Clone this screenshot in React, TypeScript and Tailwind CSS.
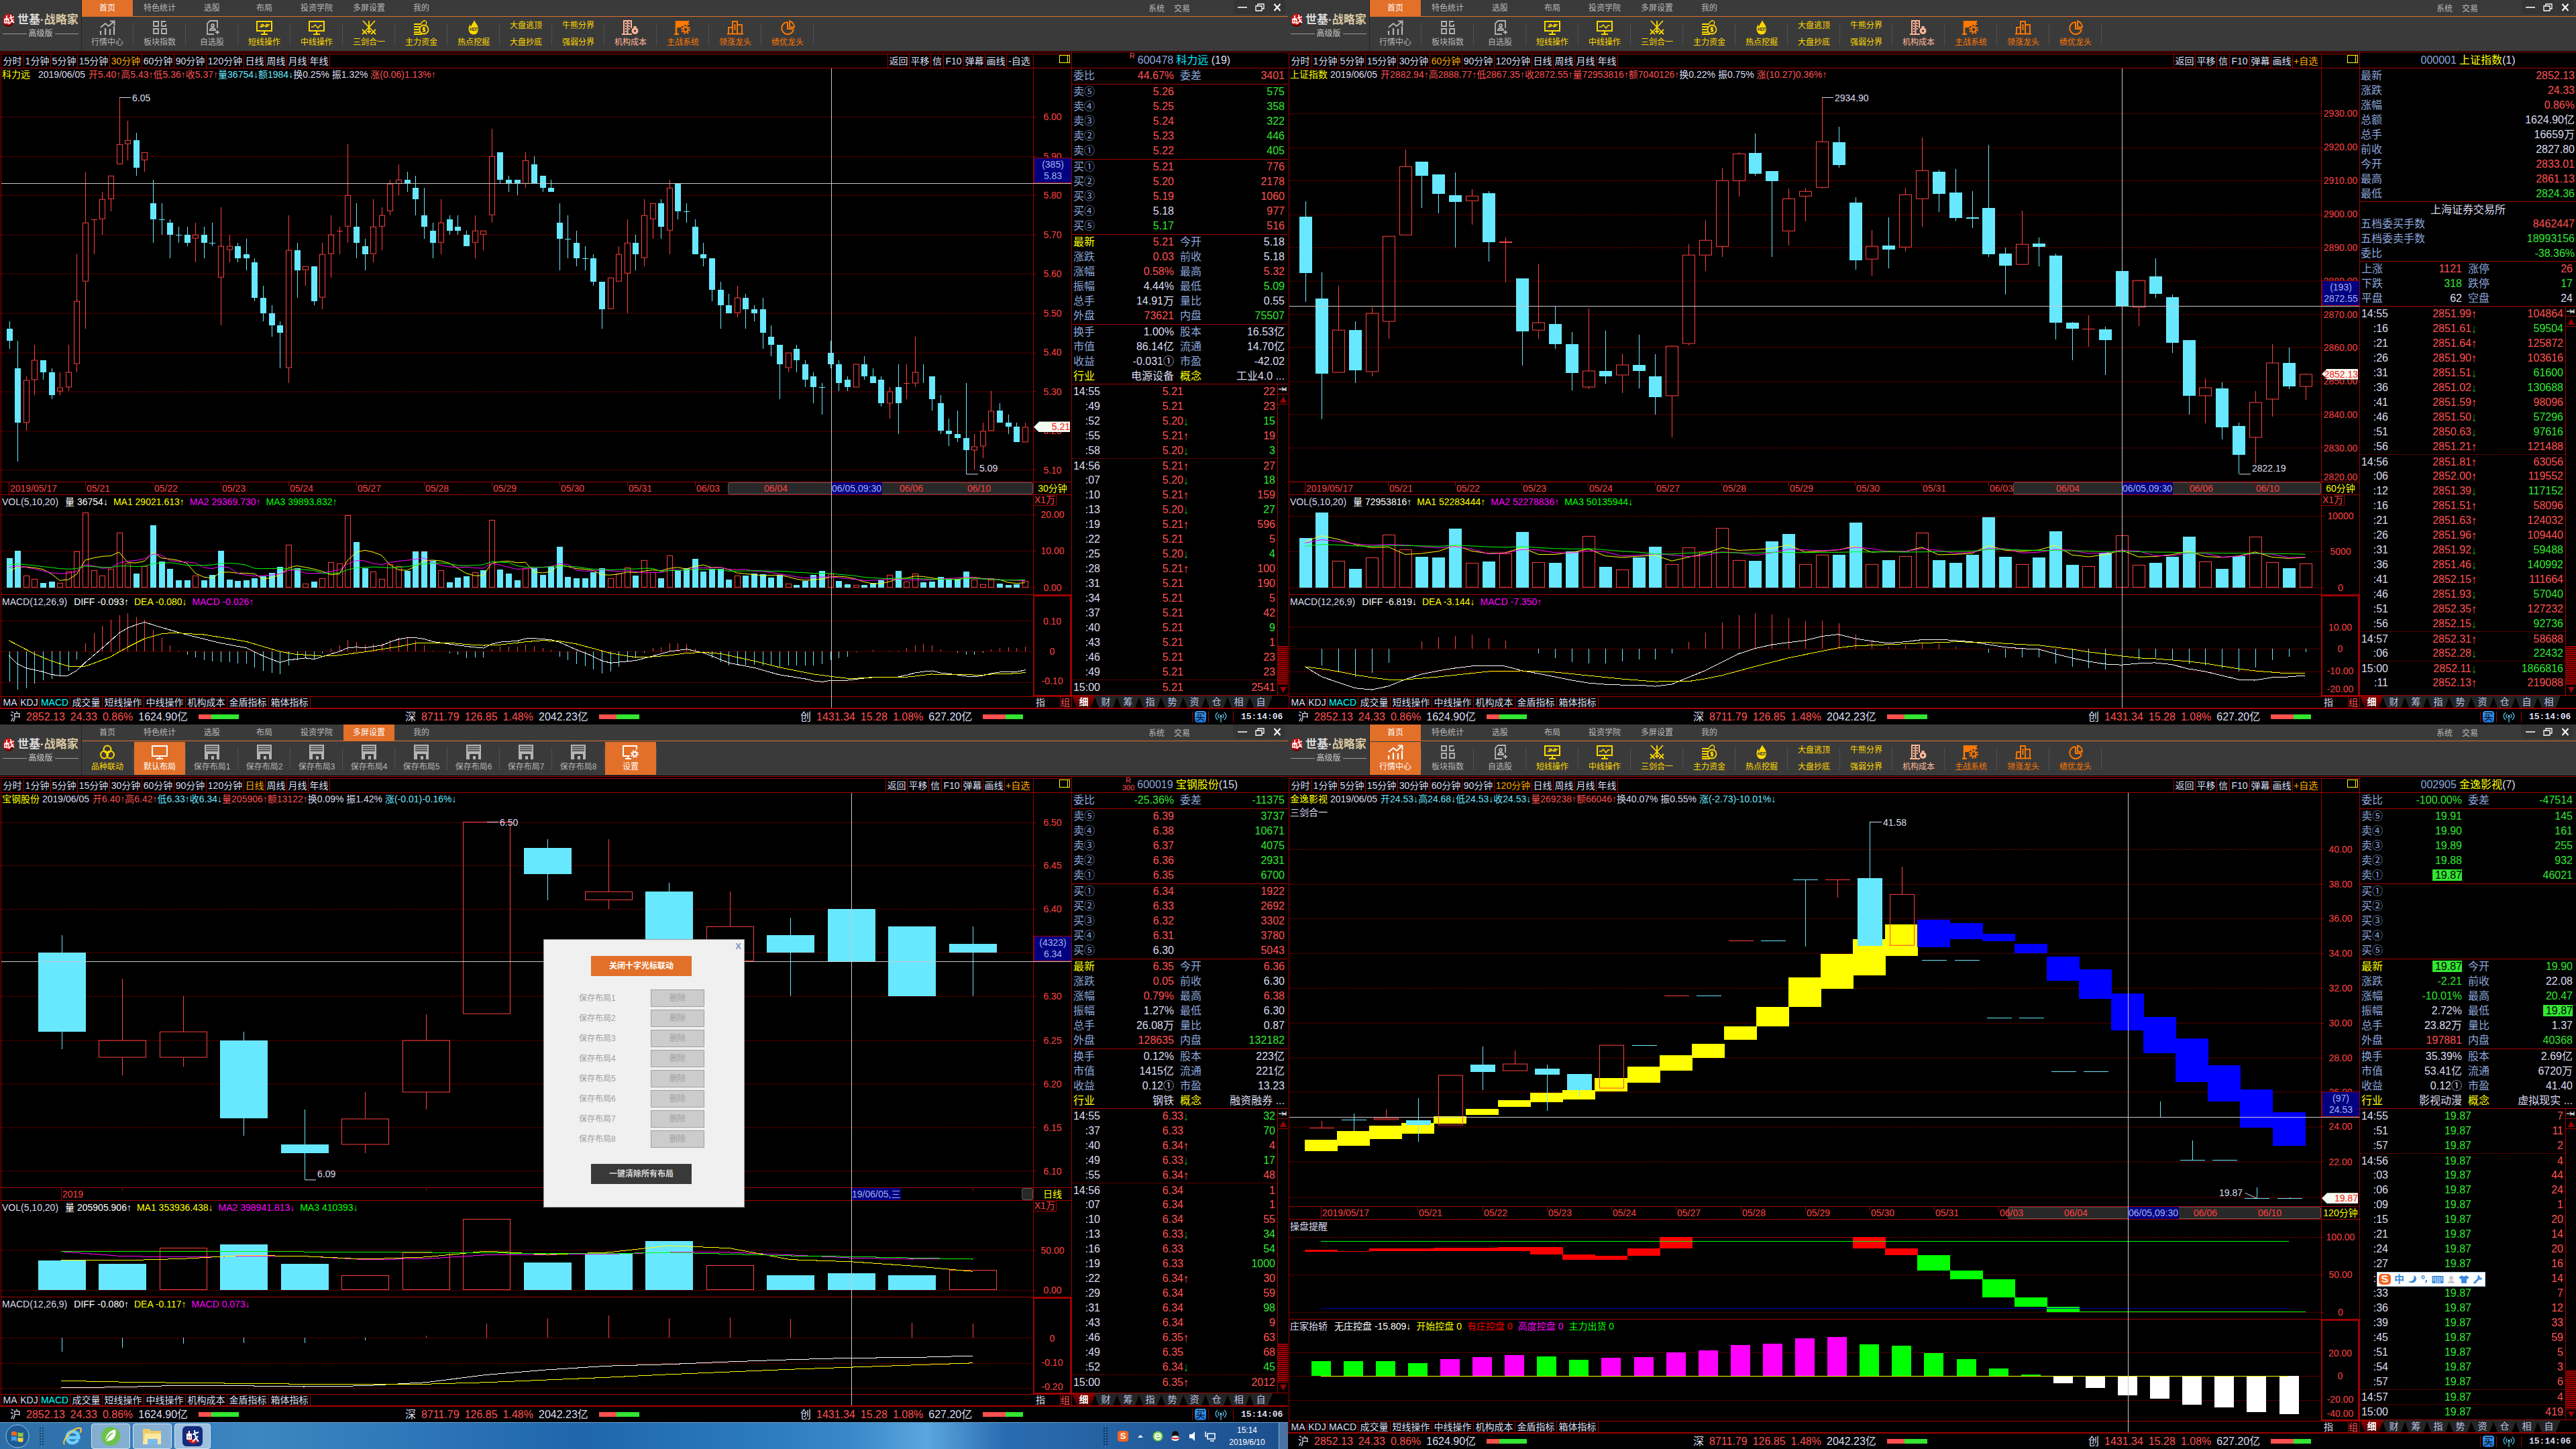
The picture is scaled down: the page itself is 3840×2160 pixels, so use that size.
import React from "react";

/* ---------- shared colours ---------- */
const R = "text-[#ff5050]";
const G = "text-[#32e632]";
const W = "text-[#dcdcf0]";
const Y = "text-[#ffff00]";
const C = "text-[#68e8ff]";
const M = "text-[#ff00ff]";
const B = "text-[#8ca6dc]";
const H = "bg-[#32e632] text-black pl-1";
const RED = "#ff4040";
const CYAN = "#68e8ff";
const LINE = "#a00000";

type Pt = [number, number];
type Map1 = (v: number) => number;
type Seg = [string, string];

/* ---------- toolbar icons ---------- */
const ic = "h-[22px] w-[26px]";
const Svg = ({ children }: { children: React.ReactNode }) => (
  <svg className={ic} viewBox="0 0 26 22" fill="none" stroke="currentColor" strokeWidth={2}>
    {children}
  </svg>
);
const icons: Record<string, React.ReactNode> = {
  trend: (
    <Svg>
      <path d="M3 22v-6M10 22V12M17 22v-9M23 22V9" strokeWidth={2.2} />
      <path d="M3 11l7-6 5 4 8-7M17 1.5h6.500V8" />
    </Svg>
  ),
  grid: (
    <Svg>
      <path d="M4 2h7v7H4zM22 2h-6v7h6V6M4 13h7v7H4zM16 13h7v7h-7z" strokeWidth={1.8} />
    </Svg>
  ),
  doc: (
    <Svg>
      <path d="M21 12V1H10L6 5v16h10" strokeWidth={1.8} />
      <circle cx="14" cy="8" r="2" strokeWidth={1.8} />
      <path d="M10 15c0-4 8-4 8 0zM21 15v6M18 18h6" strokeWidth={1.8} />
    </Svg>
  ),
  screenA: (
    <Svg>
      <path d="M2 2h22v14H2zM13 16v4M8 21h10" />
      <path d="M6 10h3l2-3 4 3 3-3h3" strokeWidth={1.3} />
      <circle cx="10" cy="8" r="1.8" strokeWidth={1.2} />
      <circle cx="17" cy="8" r="1.8" strokeWidth={1.2} />
    </Svg>
  ),
  screenB: (
    <Svg>
      <path d="M2 2h22v14H2zM13 16v4M8 21h10" />
      <path d="M5 10h3l3-3 4 5 3-4h3" strokeWidth={1.4} />
    </Svg>
  ),
  swords: (
    <Svg>
      <path d="M4 1l16 17M22 1L6 18M13 1v19M3 14l7 7M23 14l-7 7M3 21l4-4M23 21l-4-4M10 17h6" strokeWidth={1.8} />
    </Svg>
  ),
  coins: (
    <Svg>
      <path d="M2 6h11M2 10h9M2 14h8M2 18h9M2 21h12" strokeWidth={2} />
      <circle cx="17" cy="14" r="6.5" strokeWidth={1.8} />
      <path d="M19 11.5h-3.5V14h3v2.500H15M17 10v8M12 6c2-4 5-6 7-5s2 3 1 6" strokeWidth={1.3} />
    </Svg>
  ),
  flame: (
    <svg className={ic} viewBox="0 0 26 22">
      <path d="M14 0c1 4 6 7 6 13 0 5-3 8.500-7 8.500S5.500 18 5.500 13C5.500 10 7 8 8 6c0 2 .5 3 1.500 4C9.500 6 13 4 14 0z" fill="currentColor" />
      <path d="M8 11v5M11 11v5M8 13.500h3M12.500 11.500h3v4h-3zM16.500 11.500h3M18 11.500V16" stroke="#3a3a3a" strokeWidth={1} fill="none" />
    </svg>
  ),
  building: (
    <svg className={ic} viewBox="0 0 26 22" fill="none" stroke="currentColor">
      <path d="M3 21V1h11v11M0 21h15M5 5h2M10 5h2M5 9h2M10 9h2M5 13h2M10 13h2M5 17h2M8.500 2v19" strokeWidth={2} />
      <circle cx="19.500" cy="16" r="5" fill="currentColor" stroke="none" />
      <path d="M17 9h5l-1.500 3h-2z" fill="currentColor" stroke="none" />
      <circle cx="19.500" cy="16" r="1.700" fill="#3a3a3a" stroke="none" />
    </svg>
  ),
  strategy: (
    <svg className={ic} viewBox="0 0 26 22" fill="none" stroke="currentColor">
      <path d="M3 1v20M0 21h7" strokeWidth={2.6} />
      <path d="M3 1h20l-2 3 2 3h-6l-8 4H3z" fill="currentColor" stroke="none" />
      <circle cx="17" cy="14" r="7" fill="#3a3a3a" stroke="none" />
      <circle cx="17" cy="14" r="3.600" strokeWidth={2.4} />
      <circle cx="17" cy="14" r="6" strokeWidth={2} strokeDasharray="2.4 2.3" />
    </svg>
  ),
  podium: (
    <Svg>
      <path d="M3 20v-9h6v9M9 20V2h7v18M16 20V7h7v13M1 20.500h24M12.500 6v9" strokeWidth={1.9} />
    </Svg>
  ),
  pie: (
    <Svg>
      <path d="M13 3a9 9 0 109 11" strokeWidth={2} />
      <path d="M16 1.500a9 9 0 017 9h-7zM13 3v10h9" strokeWidth={2} />
    </Svg>
  ),
  link: (
    <Svg>
      <circle cx="13" cy="7" r="5.500" />
      <circle cx="8.500" cy="15" r="5.500" />
      <circle cx="17.500" cy="15" r="5.500" />
    </Svg>
  ),
  monitor: (
    <Svg>
      <path d="M2 2h22v15H2zM13 17v4M8 21h10" />
    </Svg>
  ),
  disk: (
    <svg className={ic} viewBox="0 0 26 22">
      <path d="M2 0h22v22H2z" fill="currentColor" />
      <path d="M4 3h18M4 6h18M4 9h18" stroke="#3a3a3a" strokeWidth={1.4} />
      <path d="M7 14h13v8h-4v-5h-4v5H7z" fill="#3a3a3a" />
    </svg>
  ),
  setup: (
    <Svg>
      <path d="M12 17H2V2h20v5M9 17v4M5 21h9" />
      <circle cx="19" cy="14" r="3" />
      <circle cx="19" cy="14" r="5" strokeWidth={1.8} strokeDasharray="2 1.930" />
    </Svg>
  ),
};

type Tool = { icon?: string; text: string; text2?: string; tone: string; on?: boolean };
const gray = "text-[#b4b4b4]";
const gold = "text-[#ffd800]";
const pink = "text-[#ffb699]";
const orange = "text-[#ff7800]";

const homeTools: Tool[] = [
  { icon: "trend", text: "行情中心", tone: gray },
  { icon: "grid", text: "板块指数", tone: gray },
  { icon: "doc", text: "自选股", tone: gray },
  { icon: "screenA", text: "短线操作", tone: gold },
  { icon: "screenB", text: "中线操作", tone: gold },
  { icon: "swords", text: "三剑合一", tone: gold },
  { icon: "coins", text: "主力资金", tone: gold },
  { icon: "flame", text: "热点挖掘", tone: gold },
  { text: "大盘逃顶", text2: "大盘抄底", tone: gold },
  { text: "牛熊分界", text2: "强弱分界", tone: gold },
  { icon: "building", text: "机构成本", tone: pink },
  { icon: "strategy", text: "主战系统", tone: orange },
  { icon: "podium", text: "领涨龙头", tone: orange },
  { icon: "pie", text: "绩优龙头", tone: orange },
];
const layoutTools: Tool[] = [
  { icon: "link", text: "品种联动", tone: gold },
  { icon: "monitor", text: "默认布局", tone: "text-white", on: true },
  ...[1, 2, 3, 4, 5, 6, 7, 8].map((n) => ({ icon: "disk", text: "保存布局" + n, tone: gray })),
  { icon: "setup", text: "设置", tone: "text-white", on: true },
];
const menu = ["首页", "特色统计", "选股", "布局", "投资学院", "多屏设置", "我的"];

function Header({ active, tools }: { active: string; tools: Tool[] }) {
  return (
    <header className="flex h-[76px] shrink-0 bg-[#3a3a3a] text-[12px]">
      <div className="flex w-[122px] shrink-0 flex-col border-r border-[#252525] pt-5">
        <div className="flex items-center gap-1 pl-1">
          <svg className="h-5 w-[18px]" viewBox="0 0 18 20">
            <ellipse cx="9" cy="10" rx="8.500" ry="9.500" fill="#d01414" />
            <path d="M2 15c4 4 10 4 14-3 0 5-3 7.500-7 7.500S3 18 2 15z" fill="#500000" />
            <path d="M6 3v11M3 8h6M3 9h6v5H3zM10 7l7-2M12 2c0 6 2 10 5 12M16 9l-7 7" stroke="#fff" strokeWidth={1.6} fill="none" />
          </svg>
          <span className="text-[17px] leading-5 font-bold whitespace-nowrap">
            <span className="text-[#dadada]">世基·</span>
            <span className="text-[#d9c8a2]">战略家</span>
          </span>
        </div>
        <div className="mt-0.5 flex items-center gap-[3px] px-1 leading-4 text-[#c8c8c8]">
          <span className="h-px flex-1 bg-[#9a9a9a]" />
          高级版
          <span className="h-px flex-1 bg-[#9a9a9a]" />
        </div>
      </div>
      <div className="flex min-w-0 flex-1 flex-col">
        <div className="flex h-[25px] border-b border-[#e27029]">
          <nav className="flex gap-0.5">
            {menu.map((m) => (
              <button key={m} className={m === active ? "h-6 w-[76px] bg-[#e27029] text-white" : "h-6 w-[76px] text-[#b8b8b8]"}>
                {m}
              </button>
            ))}
          </nav>
          <div className="ml-auto flex items-start">
            <button className="mr-[14px] h-[26px] text-[#b8b8b8]">系统</button>
            <button className="mr-[65px] h-[26px] text-[#b8b8b8]">交易</button>
            <button aria-label="最小化" className="mr-px flex h-[21px] w-[25px] items-center justify-center bg-[#343434]">
              <span className="h-0.5 w-[14px] bg-[#d0d0d0]" />
            </button>
            <button aria-label="还原" className="mr-px flex h-[21px] w-[25px] items-center justify-center bg-[#343434]">
              <svg className="h-3 w-3.5" viewBox="0 0 14 12" fill="none" stroke="#fff" strokeWidth={1.3}>
                <path d="M1 4h9v7H1zM4 4V1h9v7h-3" />
              </svg>
            </button>
            <button aria-label="关闭" className="mr-1 flex h-[21px] w-[25px] items-center justify-center bg-[#343434]">
              <svg className="h-3 w-3" viewBox="0 0 12 12" stroke="#fff" strokeWidth={2}>
                <path d="M1.500 1l9 10M10.500 1l-9 10" />
              </svg>
            </button>
          </div>
        </div>
        <div className="flex items-center pt-px">
          {tools.map((t) => (
            <React.Fragment key={t.text}>
              {t.text2 ? (
                <div className={"flex h-[49px] w-[76px] flex-col items-center justify-between py-1 " + t.tone}>
                  <button className="leading-4">{t.text}</button>
                  <button className="leading-4">{t.text2}</button>
                </div>
              ) : (
                <button className={(t.on ? "bg-[#e27029] " : "") + "flex h-[49px] w-[76px] flex-col items-center justify-between py-1 leading-4 " + t.tone}>
                  {icons[t.icon!]}
                  <span>{t.text}</span>
                </button>
              )}
              <span className="mr-px h-[34px] w-px bg-[#505050]" />
            </React.Fragment>
          ))}
        </div>
      </div>
    </header>
  );
}

/* ---------- period strip ---------- */
const periods: [string, string][] = [
  ["分时", "w-[34px]"],
  ["1分钟", "w-[40px]"],
  ["5分钟", "w-[40px]"],
  ["15分钟", "w-[48px]"],
  ["30分钟", "w-[48px]"],
  ["60分钟", "w-[48px]"],
  ["90分钟", "w-[48px]"],
  ["120分钟", "w-[56px]"],
  ["日线", "w-[32px]"],
  ["周线", "w-[32px]"],
  ["月线", "w-[32px]"],
  ["年线", "w-[32px]"],
];
const actions: [string, string][] = [
  ["返回", "w-[32px]"],
  ["平移", "w-[32px]"],
  ["信", "w-[19px]"],
  ["F10", "w-[30px]"],
  ["弹幕", "w-[32px]"],
  ["画线", "w-[32px]"],
];

function PeriodBar({ active, added }: { active: string; added: boolean }) {
  return (
    <div className="mt-0.5 flex h-[22px] shrink-0 border-y border-[#a00000] text-[14px] leading-5 text-[#dcdcf0]">
      <div className="flex flex-1 whitespace-nowrap">
        {periods.map(([p, w]) => (
          <button key={p} className={w + " flex shrink-0 justify-center border-r border-[#a00000] " + (p === active ? "text-[#ffa500]" : "")}>
            {p}
          </button>
        ))}
        <div className="ml-auto flex">
          {actions.map(([a, w]) => (
            <button key={a} className={w + " flex shrink-0 justify-center border-l border-[#a00000]"}>
              {a}
            </button>
          ))}
          {added ? (
            <button className="w-[40px] shrink-0 border-l border-[#a00000] pl-0.5 text-left">-自选</button>
          ) : (
            <button className="w-[43px] shrink-0 border-l border-[#a00000] pl-px text-left text-[#ffa500]">+自选</button>
          )}
        </div>
      </div>
      <div className="flex w-[57px] shrink-0 justify-end border-l border-[#a00000] pt-px pr-0.5">
        <button aria-label="侧栏" className="flex h-3 w-4 justify-end border border-[#ffff00]">
          <span className="mr-0.5 h-full w-px bg-[#ffff00]" />
        </button>
      </div>
    </div>
  );
}

/* ---------- chart primitives ---------- */
type Bar = { up: boolean; a: number; b: number; h: number; l: number };
const parseBars = (s: string): Bar[] =>
  s
    .trim()
    .split(/\s+/)
    .map((t) => {
      const [a, b, h, l] = t.slice(1).split(",").map(Number);
      return { up: t[0] === "r", a, b: b ?? a, h: h ?? a, l: l ?? b ?? a };
    });
const parseVols = (s: string): { k: string; v: number }[] =>
  s
    .trim()
    .split(/\s+/)
    .map((t) => ({ k: t[0], v: Number(t.slice(1)) }));

function Candles({ bars, x0, step, w, fy }: { bars: Bar[]; x0: number; step: number; w: number; fy: Map1 }) {
  return (
    <g>
      {bars.map((b, i) => {
        const cx = Math.round(x0 + step * i);
        const t = Math.round(fy(b.a));
        const m = Math.round(fy(b.b));
        const hi = Math.round(fy(b.h));
        const lo = Math.round(fy(b.l));
        const col = b.up ? RED : CYAN;
        const left = cx - (w - 1) / 2;
        return (
          <g key={i} fill={col}>
            {hi < t && <rect x={cx} y={hi} width={1} height={t - hi} />}
            {lo > m && <rect x={cx} y={m} width={1} height={lo - m} />}
            {b.up && m - t > 2 ? (
              <rect x={left + 0.5} y={t + 0.5} width={w - 1} height={m - t - 1} fill="none" stroke={col} />
            ) : (
              <rect x={left} y={t} width={w} height={Math.max(m - t, 1)} />
            )}
          </g>
        );
      })}
    </g>
  );
}
function Volumes({ vols, x0, step, w, base, fy }: { vols: { k: string; v: number }[]; x0: number; step: number; w: number; base: number; fy: Map1 }) {
  return (
    <g>
      {vols.map((b, i) => {
        const left = Math.round(x0 + step * i) - (w - 1) / 2;
        const t = Math.round(fy(b.v));
        return b.k === "r" ? (
          <rect key={i} x={left + 0.5} y={t + 0.5} width={w - 1} height={base - t - 1} fill="none" stroke={RED} />
        ) : (
          <rect key={i} x={left} y={t} width={w} height={base - t} fill={CYAN} />
        );
      })}
    </g>
  );
}
function Hist({ vals, x0, step, zero, fy }: { vals: number[]; x0: number; step: number; zero: number; fy: Map1 }) {
  return (
    <g>
      {vals.map((v, i) => {
        const y = Math.round(fy(v));
        return <rect key={i} x={Math.round(x0 + step * i)} y={Math.min(y, zero)} width={1} height={Math.abs(y - zero)} fill={y < zero ? RED : CYAN} />;
      })}
    </g>
  );
}
const Poly = ({ pts, color }: { pts: Pt[]; color: string }) => (
  <polyline points={pts.map((p) => p.join(",")).join(" ")} fill="none" stroke={color} strokeWidth={1} />
);
const conv = (s: string, fx: Map1, fy: Map1): Pt[] =>
  s
    .trim()
    .split(/\s+/)
    .map((p) => {
      const [x, y] = p.split(",").map(Number);
      return [fx(x), fy(y)];
    });
const average = (vols: { v: number }[], before: number[], n: number, x0: number, step: number, fy: Map1): Pt[] => {
  const all = [...before, ...vols.map((d) => d.v)];
  return vols.map((_, i) => {
    const e = i + before.length + 1;
    const s = all.slice(e - n, e).reduce((p, q) => p + q, 0) / n;
    return [x0 + step * i, fy(s)];
  });
};
const fill = (n: number, v: number): number[] => Array.from({ length: n }, () => v);

type PaneProps = {
  grow: string;
  y: number;
  h: number;
  grid: number[];
  labels: [number, string][];
  boxed?: boolean;
  unit?: boolean;
  cross?: number;
  tip?: [string, string];
  last?: [number, string];
  marks?: [number, number, string][];
  title: React.ReactNode;
  children: React.ReactNode;
};
function Pane({ grow, y, h, grid, labels, boxed, unit, cross, tip, last, marks = [], title, children }: PaneProps) {
  const pc = (v: number) => ((v - y) / h) * 100 + "%";
  return (
    <div className={grow + " relative flex min-h-0 border-b border-[#a00000]"}>
      <div className="relative min-w-0 flex-1 overflow-hidden">
        <svg className="absolute inset-0 h-full w-full" viewBox={`2 ${y} 1538 ${h}`} preserveAspectRatio="none" shapeRendering="crispEdges">
          {grid.map((g) => (
            <line key={g} x1={2} x2={1540} y1={Math.round(g) + 0.5} y2={Math.round(g) + 0.5} stroke={LINE} strokeDasharray="1 1" />
          ))}
          {children}
        </svg>
        <div className="relative px-px text-[14px] leading-4 whitespace-nowrap">{title}</div>
        {marks.map(([mx, my, t]) => (
          <span key={t} className={"absolute -translate-y-1/2 text-[14px] leading-4 " + W} style={{ left: ((mx - 2) / 1538) * 100 + "%", top: pc(my) }}>
            {t}
          </span>
        ))}
      </div>
      <div className={(boxed ? "border-2 " : "border-l ") + "relative w-[57px] shrink-0 overflow-hidden border-[#a00000] text-[14px] leading-4 text-[#ff4040]"}>
        {unit && <div className="w-[34px] border-r border-b border-[#a00000] text-center leading-[15px]">X1万</div>}
        {labels.map(([ly, t]) => (
          <span key={t} className="absolute inset-x-0 -translate-y-1/2 text-center" style={{ top: pc(ly) }}>
            {t}
          </span>
        ))}
        {!boxed && grid.map((g) => <span key={g} className="absolute left-0 h-px w-[3px] bg-[#a00000]" style={{ top: pc(Math.round(g)) }} />)}
        {tip && cross && (
          <div className="absolute inset-x-0 -translate-y-full border border-r-0 border-[#a00000] bg-[#000080] py-px text-center leading-[17px] text-[#a0b4f0]" style={{ top: pc(cross) }}>
            {tip[0]}
            <br />
            {tip[1]}
          </div>
        )}
        {last && (
          <div className="absolute right-0.5 left-0 h-4 -translate-y-1/2 bg-[#f4fbf0] text-right leading-4 text-[#ff1414] [clip-path:polygon(0_50%,8px_0,100%_0,100%_100%,8px_100%)]" style={{ top: pc(last[0]) }}>
            {last[1]}
          </div>
        )}
      </div>
      {cross && <div className="absolute inset-x-0 h-px bg-[#c8c8c8]" style={{ top: pc(cross) }} />}
    </div>
  );
}

type AxisProps = { dates: [number, string][]; thumb: number; cursor: [number, string]; period: string; ticks?: number[] };
function TimeAxis({ dates, thumb, cursor, period, ticks = [] }: AxisProps) {
  const pc = (x: number) => ((x - 2) / 1538) * 100 + "%";
  return (
    <div className="flex h-[19px] shrink-0 border-b border-[#a00000] text-[14px] leading-[18px]">
      <div className="relative flex-1 overflow-hidden text-[#ff4040]">
        <div className="absolute inset-y-0 right-0 rounded-[3px] border border-[#5a5a5a] bg-[#282828]" style={{ left: pc(thumb) }} />
        {ticks.map((x) => (
          <span key={x} className="absolute top-0 h-1 w-px bg-[#a00000]" style={{ left: pc(x) }} />
        ))}
        {dates.map(([x, t], i) => (
          <span key={t} className="absolute top-0 flex" style={{ left: pc(x) }}>
            <span className={(i ? "h-1.5" : "h-[18px]") + " w-px bg-[#a00000]"} />
            <span className="pl-px">{t}</span>
          </span>
        ))}
        <span className="absolute inset-y-0 bg-[#000080] px-px text-[#a0b4f0]" style={{ left: pc(cursor[0]) }}>
          {cursor[1]}
        </span>
      </div>
      <div className={"w-[57px] shrink-0 border-l border-[#a00000] text-center " + Y}>{period}</div>
    </div>
  );
}

const Legend = ({ name, items }: { name: string; items: Seg[] }) => (
  <div className="flex gap-2 pt-0.5">
    <span className={W + " mr-0.5"}>{name}</span>
    {items.map(([t, c]) => (
      <span key={t} className={c}>
        {t}
      </span>
    ))}
  </div>
);
const Info = ({ name, date, segs, sub }: { name: string; date: string; segs: Seg[]; sub?: string }) => (
  <div className="pt-px">
    <div className="flex">
      <span className={"mr-1 min-w-[50px] " + Y}>{name}</span>
      <span className={"mr-[5px] " + W}>{date}</span>
      {segs.map(([t, c]) => (
        <span key={t} className={c + " whitespace-pre"}>
          {t}
        </span>
      ))}
    </div>
    {sub && <div className={"pt-1 " + W}>{sub}</div>}
  </div>
);

const indicatorTabs: [string, string][] = [
  ["MA", "w-[27px]"],
  ["KDJ", "w-[30px]"],
  ["MACD", "w-[46px]"],
  ["成交量", "w-[48px]"],
  ["短线操作", "w-[62px]"],
  ["中线操作", "w-[62px]"],
  ["机构成本", "w-[62px]"],
  ["金盾指标", "w-[62px]"],
  ["箱体指标", "w-[62px]"],
];
function IndicatorBar({ macd }: { macd: boolean }) {
  return (
    <div className={"flex h-4 shrink-0 text-[14px] leading-4 " + W}>
      {indicatorTabs.map(([t, w]) => (
        <button key={t} className={w + " flex shrink-0 justify-center overflow-hidden border-r border-[#a00000] whitespace-nowrap " + (macd && t === "MACD" ? "text-[#00ffff]" : "")}>
          {t}
        </button>
      ))}
      <button className="ml-auto pr-[22px]">指</button>
      <button className="mr-0.5 border-l border-[#a00000] text-[#ff5050]">组</button>
    </div>
  );
}

/* ---------- status bar ---------- */
const market: [string, string, string, string, string, string, string][] = [
  ["沪", "2852.13", "24.33", "0.86%", "1624.90亿", "w-[19px]", "w-[41px]"],
  ["深", "8711.79", "126.85", "1.48%", "2042.23亿", "w-[26px]", "w-[34px]"],
  ["创", "1431.34", "15.28", "1.08%", "627.20亿", "w-[34px]", "w-[26px]"],
];
function StatusBar() {
  return (
    <footer className={"flex h-[25px] shrink-0 items-center border-t-2 border-[#a00000] text-[16px] leading-[22px] whitespace-nowrap " + W}>
      {market.map(([n, p, d, r, amt, rw, gw]) => (
        <div key={n} className="flex flex-1 items-center gap-2 pl-[15px]">
          <span>{n}</span>
          <span className={R}>{p}</span>
          <span className={R}>{d}</span>
          <span className={R}>{r}</span>
          <span>{amt}</span>
          <span className="ml-2 flex h-[7px]">
            <span className={rw + " bg-[#ff5050]"} />
            <span className={gw + " bg-[#32e632]"} />
          </span>
        </div>
      ))}
      <div className="flex w-[153px] items-center pl-[10px]">
        <span className="mr-[3px] h-4 w-px bg-[#a00000]" />
        <button className="h-[17px] w-[17px] rounded-sm bg-linear-to-b from-[#3c9cf4] to-[#1c6cd0] text-[14px] leading-[17px] text-black">买</button>
        <span className="mx-[3px] h-4 w-px bg-[#a00000]" />
        <svg className="mx-1.5 h-4 w-[18px]" viewBox="0 0 18 16" fill="none" stroke="#4cb0d4" strokeWidth={1.5}>
          <path d="M4 1c-4 4-4 7 0 11M14 1c4 4 4 7 0 11M6.500 3.500c-2 2-2 4 0 6M11.500 3.500c2 2 2 4 0 6M9 7v9" />
          <circle cx="9" cy="6.500" r="1.500" fill="#9ad4ea" stroke="none" />
        </svg>
        <span className="mx-[3px] h-4 w-px bg-[#a00000]" />
        <span className="ml-2 font-['Liberation_Mono',monospace] text-[13px] font-bold">15:14:06</span>
      </div>
    </footer>
  );
}

/* ---------- quote panel ---------- */
const circled = /([①②③④⑤])/;
const Mixed = ({ text }: { text: string }) => (
  <>
    {text.split(circled).map((s, i) =>
      circled.test(s) ? (
        <span key={i} className="font-['Noto_Sans_CJK_SC'] leading-none">
          {s}
        </span>
      ) : (
        s
      ),
    )}
  </>
);

type QRow = [string, string, string, string?, string?, string?, boolean?];
function Quote({ rows, last }: { rows: QRow[]; last?: boolean }) {
  return (
    <div className={(last ? "" : "pb-px ") + "border-b border-[#a00000]"}>
      <table className="w-full table-fixed border-separate border-spacing-0 text-[16px] leading-[22px] whitespace-nowrap">
        <colgroup>
          <col className="w-[42px]" />
          <col className="w-[110px]" />
          <col className="w-[41px]" />
          <col />
        </colgroup>
        <tbody>
          {rows.map(([a, v, vc, b, v2, c2, hot]) => (
            <tr key={a}>
              <th className={"h-[22px] p-0 pl-0.5 text-left font-normal " + (hot ? Y : B)}>
                <Mixed text={a} />
              </th>
              <td className="p-0 text-right">
                <span className={vc}>
                  <Mixed text={v} />
                </span>
              </td>
              <th className={"p-0 pl-[9px] text-left font-normal " + (hot && b === "概念" ? Y : B)}>{b}</th>
              <td className="p-0 pr-[5px] text-right">
                <span className={c2}>{v2}</span>
              </td>
            </tr>
          ))}
        </tbody>
      </table>
    </div>
  );
}

type Tick = [string, string, string, string];
const parseTicks = (s: string): Tick[] => s.trim().split(/\s+/).map((t) => t.split("|") as Tick);

function Ticks({ rows, tone }: { rows: Tick[]; tone: string }) {
  return (
    <div className="flex min-h-0 flex-1 border-b border-[#a00000]">
      <div className="min-w-0 flex-1 overflow-hidden">
        <table className="w-full table-fixed border-separate border-spacing-0 text-[16px] leading-5">
          <colgroup>
            <col className="w-[42px]" />
            <col className="w-[132px]" />
            <col />
          </colgroup>
          <tbody>
            {rows.map(([t, p, d, q], i) => {
              const sep = t.length > 3 && i > 0 ? " border-t border-dotted border-[#a00000]" : "";
              return (
                <tr key={i}>
                  <td className={"h-[22px] p-0 text-right " + W + sep}>{t}</td>
                  <td className={"p-0 " + tone + sep}>
                    <span className="flex justify-end">
                      {p}
                      <span className={"flex w-2 justify-center text-[18px] leading-5 " + (d === "d" ? "text-[#1e961e]" : R)}>{d === "u" ? "↑" : d === "d" ? "↓" : ""}</span>
                    </span>
                  </td>
                  <td className={"p-0 pr-[3px] text-right " + (q[0] === "g" ? G : R) + sep}>{q.slice(1)}</td>
                </tr>
              );
            })}
          </tbody>
        </table>
      </div>
      <div className="flex w-4 shrink-0 flex-col items-center border-l border-[#a00000]">
        <button aria-label="固定" className="flex h-[15px] w-full items-center justify-center border-b border-[#a00000]">
          <svg className="h-2 w-[14px]" viewBox="0 0 14 8" stroke="#c8c8c8" fill="#c8c8c8">
            <path d="M0 4h6M6 1v6M6 4h5M11 1v6" strokeWidth={1.4} />
            <path d="M7 3h4v3H7z" stroke="none" />
          </svg>
        </button>
        <button aria-label="向上" className="flex h-[15px] w-full items-center justify-center border-b border-[#a00000]">
          <span className="border-x-[5px] border-b-[9px] border-x-transparent border-b-[#a00000]" />
        </button>
        <span className="flex-1" />
        <span className="h-[58px] w-full bg-[repeating-linear-gradient(#a00000_0_2px,#200000_2px_3px)]" />
        <button aria-label="向下" className="flex h-[15px] w-full items-center justify-center">
          <span className="border-x-[5px] border-t-[9px] border-x-transparent border-t-[#a00000]" />
        </button>
      </div>
    </div>
  );
}

function PanelTabs({ swap }: { swap?: boolean }) {
  const tabs = ["细", "财", "筹", "指", "势", "资", "仓", ...(swap ? ["自", "相"] : ["相", "自"])];
  return (
    <div className="flex h-[18px] shrink-0">
      {tabs.map((t, i) => (
        <button
          key={t}
          className={
            "-mr-0.5 w-[35px] text-[14px] leading-[18px] [clip-path:polygon(0_0,100%_0,80%_100%,20%_100%)] " +
            (i === 0 ? "bg-linear-to-b from-[#900000] to-[#400000] font-bold text-white" : "bg-[#242424] text-[#b8c4e8]")
          }
        >
          {t}
        </button>
      ))}
    </div>
  );
}

const PanelTitle = ({ tag, tag2, code, name, tone, n }: { tag?: string; tag2?: string; code: string; name: string; tone: string; n: string }) => (
  <div className="flex h-6 shrink-0 items-center justify-center border-b border-[#a00000] text-[16px] leading-[22px] whitespace-nowrap">
    {tag && (
      <span className="mr-1 flex h-full flex-col text-center text-[11px] leading-[11px] text-[#ff5050]">
        <span>{tag}</span>
        {tag2 && <span>{tag2}</span>}
      </span>
    )}
    <span className={B}>{code}</span>
    <span className={"ml-1 " + tone}>{name}</span>
    <span className={W}>{n}</span>
  </div>
);

/* ---------- one terminal window ---------- */
type WinProps = {
  menuOn: string;
  tools: Tool[];
  period: string;
  added?: boolean;
  macd?: boolean;
  crossX: number;
  charts: React.ReactNode;
  panel: React.ReactNode;
  children?: React.ReactNode;
};
function Terminal({ menuOn, tools, period, added = false, macd = true, crossX, charts, panel, children }: WinProps) {
  return (
    <section className="relative flex min-h-0 flex-1 flex-col overflow-hidden bg-black">
      <Header active={menuOn} tools={tools} />
      <div className="mt-px ml-px flex min-h-0 flex-1 border-t border-l border-[#a00000]">
        <div className="flex min-w-0 flex-1 flex-col">
          <PeriodBar active={period} added={added} />
          <div className="relative flex min-h-0 flex-1 flex-col">
            {charts}
            <IndicatorBar macd={macd} />
            <div className="absolute inset-y-0 w-px bg-[#c8c8c8]" style={{ left: ((crossX - 2) / 1595) * 100 + "%" }} />
          </div>
        </div>
        <aside className="flex w-[323px] shrink-0 flex-col border-l border-[#a00000]">{panel}</aside>
      </div>
      <StatusBar />
      {children}
    </section>
  );
}

/* ---------- window 1: 科力远 ---------- */
const k1 = parseBars(`c546,543,548,541 c536,522,543,512 r533,522,534,520 r538,533,542,529 c538,535,538,533 c535,529,536,528 r531,530,535,529 r535,531,542,530 r553,537,565,535 r573,558,586,546
r574,574,574,565 r579,574,581,570 r585,579,585,576 r593,588,605,588 r594,593,599,589 c594,587,596,585 r591,589,591,586 c578,574,584,568 c574,574,578,570 c573,570,574,564
c570,570,572,568 c570,568,572,567 r570,569,573,563 c570,568,572,564 c568,568,573,567 r567,559,577,547 r567,566,570,563 c567,564,568,563 c565,564,569,561 c563,554,564,553
c554,550,557,548 c550,547,552,544 c547,545,548,536 r566,536,575,532 c566,561,568,554 r562,561,562,557 c562,553,562,552 r565,554,568,551 r570,565,575,559 r571,571,572,565
r580,572,593,568 c572,568,578,564 c567,565,569,561 r572,565,579,563 r575,572,577,566 r583,576,584,575 r584,583,588,580 c584,583,586,581 c582,579,585,575 c575,572,582,569
c571,568,573,564 r573,568,579,565 c574,571,575,570 c572,571,575,570 c570,567,571,567 r571,568,575,564 r571,570,571,566 r590,575,597,573 c591,584,591,583 c584,583,585,581
c584,583,584,580 r589,583,591,582 c588,583,590,583 c585,582,585,581 c582,581,584,581 c573,569,578,561 c569,569,575,564 c568,564,571,562 c564,564,567,561 c564,558,565,557
c558,551,558,546 r559,551 r565,558,567,558 r568,560,574,550 c568,565,570,561 r575,564,579,562 r578,574,578,569 c578,572,579,569 r582,571,584,565 c583,576,583,574
c576,576,578,573 c572,565,574,565 c565,564,568,562 c564,556,564,553 c556,552,558,546 c552,550,555,550 r554,550,557,549 c554,551,555,546 c551,550,552,548 c551,545,554,541
c544,542,547,539 c542,537,542,528 r540,536,540,535 c541,538,542,535 c537,533,538,531 c534,531,535,527 c531,531,532,524 c540,537,543,536 c537,532,538,530 c533,531,534,530
r537,531 c537,534,539,533 c534,532,536,532 c533,527,534,526 r530,527,531,523 c531,527,537,519 r532,532,537,528 r535,532,544,531 c534,534,537,532 c534,528,534,525
c527,520,529,519 c520,519,523,516 c519,518,525,517 c518,515,532,509 r516,515,519,510 r520,516,522,513 r525,520,530,520 c525,522,527,522 c522,521,524,519 c521,517,522,517 r521,517,522,517`);
const v1 = parseVols(`c459 c426 r538 r553 c570 c564 r571 r519 r430 r256 r514 r538 r508 r346 r484 c528 r496 c312 c474 c507 c558 c558 r538 c558 c533 c426 c555 c561 c558 c549 c541 c525 c498 r400 c504 r574 c564 r550 r478 r484
r268 c387 c503 r520 r553 r486 r496 c516 c429 c429 c470 r514 c567 c546 c540 r523 c513 r289 c510 c528 c558 r504 c504 c534 c496 c408 c543 c549 c549 c522 c504 r550 r529 r502 c537 r469 r523 c549 r448 c516
c504 c462 c519 c508 c508 c555 r538 c537 c528 c531 c546 c534 r574 c579 c560 c534 c516 r532 c561 c576 r580 c579 c571 c559 r533 c517 r563 r527 c568 c565 c544 c556 c551 c520 r554 r575 r556 c574 c580 c577 r560`);
const m1 = `1007 1044 1038 1018 1001 996 983 960 909 840 795 762 735 714 705 723 735 780 815 849 873 890 900 912 918 920 921 927 927 945 960 969 975 936 912 901 906 885 864 849 825 834 846 843 840 825 816 816 828 849
873 877 884 890 903 900 900 867 855 855 855 846 852 861 870 896 912 930 939 954 972 963 942 921 903 881 861 858 839 840 843 864 878 903 921 935 935 934 933 936 936 943 936 936 936 936 930 912 903 896
880 877 870 876 873 873 861 849 843 849 867 876 882 890 891 882 867 861 858 861 855`.split(/\s+/).map(Number);
const fx1: Map1 = (x) => x / 1.206;
const fy1: Map1 = (y) => 680 + y / 3;
const fxr: Map1 = (x) => 1300 + x / 2.45;
const fyr: Map1 = (y) => 560 + y / 3;
const diff1 = [
  ...conv("16,893 31,930 46,948 62,957 77,965 92,977 107,983 122,982 138,960 155,920 180,868 200,825 214,793 230,770 245,756 260,745 290,768 335,800 381,828 397,838 443,859 473,895 503,924 518,913 533,909 549,904 565,909 580,898 610,875 625,859 641,856 656,859 671,853 686,848 702,832 717,820 732,814 747,814 762,819 778,831 808,842 838,852 869,860 884,842 900,833 930,828 945,818 960,817 991,823 1006,834 1037,868 1060,890 1083,917 1098,926 1143,915 1174,895 1205,874 1235,865 1251,874 1266,882 1311,926 1357,948 1400,978 1448,997 1463,1006 1479,1010 1494,1003 1524,1003 1560,992", fx1, fy1),
  ...conv("0,1348 50,1348 95,1348 126,1340 158,1330 185,1325 219,1321 250,1330 312,1339 344,1345 374,1348 400,1343 437,1332 467,1327 535,1324 560,1317", fxr, fyr),
];
const dea1 = [
  ...conv("16,826 62,886 92,917 122,940 138,943 155,940 198,900 230,855 260,818 290,797 305,793 320,793 366,800 412,818 443,831 473,853 503,875 530,887 565,893 580,896 605,893 656,877 717,853 747,839 762,836 808,836 840,844 869,848 900,845 945,832 976,826 1006,829 1037,842 1067,862 1098,883 1143,901 1160,901 1205,892 1235,882 1266,879 1296,885 1357,918 1400,945 1463,976 1494,986 1524,995 1560,993", fx1, fy1),
  ...conv("0,1351 110,1350 158,1345 215,1336 330,1338 400,1340 437,1336 467,1336 500,1334 560,1329", fxr, fyr),
];
const before1 = [...fill(10, 476), ...fill(5, 480), ...fill(4, 535)];
const X1 = 13.5;
const S1 = 12.62;
const price1: Map1 = (c) => 174.3 + (600 - c) * 5.854;

const Charts1 = () => (
  <>
    <Pane
      grow="flex-[617]"
      y={102}
      h={617}
      grid={[600, 590, 580, 570, 560, 550, 540, 530, 520, 510].map(price1)}
      labels={[600, 590, 580, 570, 560, 550, 540, 530, 520, 510].map((c) => [price1(c), (c / 100).toFixed(2)])}
      cross={273}
      tip={["(385)", "5.83"]}
      last={[637, "5.21"]}
      marks={[
        [197, 146, "6.05"],
        [1460, 699, "5.09"],
      ]}
      title={
        <Info
          name="科力远"
          date="2019/06/05"
          segs={[
            ["开5.40↑", R],
            ["高5.43↑", R],
            ["低5.36↑", R],
            ["收5.37↑", R],
            ["量36754↓", C],
            ["额1984↓", C],
            ["换0.25% ", W],
            ["振1.32% ", W],
            ["涨(0.06)1.13%↑", R],
          ]}
        />
      }
    >
      <Candles bars={k1} x0={X1} step={S1} w={9} fy={price1} />
      <path d="M178 145.500h17M1440 707.500h18" stroke="#dcdcf0" />
    </Pane>
    <TimeAxis
      dates={[[13, "2019/05/17"], [127, "05/21"], [228, "05/22"], [329, "05/23"], [430, "05/24"], [531, "05/27"], [632, "05/28"], [733, "05/29"], [834, "05/30"], [935, "05/31"], [1036, "06/03"], [1137, "06/04"], [1339, "06/06"], [1440, "06/10"]]}
      thumb={1085}
      cursor={[1239, "06/05,09:30"]}
      period="30分钟"
    />
    <Pane
      grow="flex-[148]"
      y={739}
      h={148}
      grid={[768, 822, 877]}
      labels={[[768, "20.00"], [822, "10.00"], [877, "0.00"]]}
      unit
      title={<Legend name="VOL(5,10,20)" items={[["量 36754↓", "text-white"], ["MA1 29021.613↑", Y], ["MA2 29369.730↑", M], ["MA3 39893.832↑", "text-[#00ff00]"]]} />}
    >
      <Volumes vols={v1} x0={X1} step={S1} w={9} base={877} fy={fy1} />
      <Poly pts={average(v1, before1, 5, X1, S1, fy1)} color="#ffff00" />
      <Poly pts={average(v1, before1, 10, X1, S1, fy1)} color="#ff00ff" />
      <Poly pts={average(v1, before1, 20, X1, S1, fy1)} color="#00ff00" />
    </Pane>
    <Pane
      grow="flex-[151]"
      y={888}
      h={150}
      grid={[926, 972, 1017]}
      labels={[[926, "0.10"], [972, "0"], [1017, "-0.10"]]}
      boxed
      title={<Legend name="MACD(12,26,9)" items={[["DIFF -0.093↑", "text-white"], ["DEA -0.080↓", Y], ["MACD -0.026↑", M]]} />}
    >
      <Hist vals={m1} x0={X1} step={S1} zero={972} fy={fy1} />
      <Poly pts={diff1} color="#ffffff" />
      <Poly pts={dea1} color="#ffff00" />
    </Pane>
  </>
);
const Panel1 = () => (
  <>
    <PanelTitle tag="R" code="600478" name="科力远" tone="text-[#00e8ff]" n="&nbsp;(19)" />
    <Quote rows={[["委比", "44.67%", R, "委差", "3401", R]]} />
    <Quote rows={[["卖⑤", "5.26", R, "", "575", G], ["卖④", "5.25", R, "", "358", G], ["卖③", "5.24", R, "", "322", G], ["卖②", "5.23", R, "", "446", G], ["卖①", "5.22", R, "", "405", G]]} />
    <Quote rows={[["买①", "5.21", R, "", "776", R], ["买②", "5.20", R, "", "2178", R], ["买③", "5.19", R, "", "1060", R], ["买④", "5.18", W, "", "977", R], ["买⑤", "5.17", G, "", "516", R]]} />
    <Quote
      rows={[
        ["最新", "5.21", R, "今开", "5.18", W, true],
        ["涨跌", "0.03", R, "前收", "5.18", W],
        ["涨幅", "0.58%", R, "最高", "5.32", R],
        ["振幅", "4.44%", W, "最低", "5.09", G],
        ["总手", "14.91万", W, "量比", "0.55", W],
        ["外盘", "73621", R, "内盘", "75507", G],
      ]}
    />
    <Quote
      last
      rows={[
        ["换手", "1.00%", W, "股本", "16.53亿", W],
        ["市值", "86.14亿", W, "流通", "14.70亿", W],
        ["收益", "-0.031①", W, "市盈", "-42.02", W],
        ["行业", "电源设备", W, "概念", "工业4.0 ...", W, true],
      ]}
    />
    <Ticks
      tone={R}
      rows={parseTicks(
        "14:55|5.21||r22 :49|5.21||r23 :52|5.20|d|g15 :55|5.21|u|r19 :58|5.20|d|g3 14:56|5.21|u|r27 :07|5.20|d|g18 :10|5.21|u|r159 :13|5.20|d|g27 :19|5.21|u|r596 :22|5.21||r5 :25|5.20|d|g4 :28|5.21|u|r100 :31|5.21||r190 :34|5.21||r5 :37|5.21||r42 :40|5.21||g9 :43|5.21||r1 :46|5.21||r23 :49|5.21||r23 15:00|5.21||r2541",
      )}
    />
    <PanelTabs />
  </>
);

/* ---------- window 2: 上证指数 ---------- */
const k2 = parseBars(`c595,801,539,906 c894,1169,799,1338 r1010,1165,848,1165 c1009,1156,978,1205 r947,1163,926,1181 r667,979,667,1041 r412,665,350,665 c394,446,394,563 c441,512,441,583 c517,541,434,708
r520,538,495,625 c510,688,502,759 r686,690,671,835 c821,1014,821,1139 r983,1011,767,1041 c987,1061,923,1078 c1061,1166,1017,1232 r1160,1221,930,1227 c1159,1178,1012,1208 r1137,1177,1095,1242
c1137,1159,1027,1225 c1181,1257,1098,1321 r1069,1253,1065,1404 r734,1062,696,1066 r680,737,608,794 r464,705,419,742 r365,466,360,522 c363,439,292,446 c429,465,429,742 r528,649,492,701
r503,523,489,612 r321,489,159,492 c323,407,267,416 c544,755,524,789 r702,751,644,811 c701,715,598,784 r515,708,489,723 r427,531,306,632 c431,512,424,578 c507,600,421,610
c598,603,502,637 c563,733,333,742 c730,774,708,880 r696,771,573,771 c693,706,671,777 c737,982,729,1044 c982,1004,980,1120 r1004,1007,955,1071 c1007,1046,997,1174 c794,922,722,985
r829,928,826,995 c813,877,747,892 c889,1056,880,1093 c1046,1252,1046,1321 r1219,1253,1188,1352 c1225,1367,1203,1411 c1362,1468,1350,1536 r1273,1403,1235,1500 r1130,1263,1061,1328 c1129,1218,1073,1227 r1172,1217,1169,1267`);
const v2 = parseVols(`c309 c195 r412 c447 r397 r295 r361 c393 c396 c267 r421 c414 r379 c282 r418 c420 c369 r301 c438 r451 c396 c348 r427 r352 r370 r265 r409 c411 c324 c291 r427 r385 c384 c240 r427 c408 r391 r286 c408 c420
c384 c216 c393 r427 c396 c279 c429 r436 c376 r298 r430 c420 c393 c303 r415 c447 c390 r304 r418 c444 r424`);
const m2 = `805 876 904 927 909 864 805 771 753 746 741 756 768 805 825 843 861 867 867 858 849 849 825 774 732 687 654 645 651 666 681 678 690 741 768 795 789 777 780 795 804 822 840 840 840 867 882 888 894 874 852 840 849 870 876 888 903 885 852 837 819`.split(" ").map(Number);
const id: Map1 = (x) => x;
const fy2: Map1 = (y) => 80 + y / 2.45;
const fy2b: Map1 = (y) => 700 + y / 3;
const X2 = 25.5;
const S2 = 24.85;
const before2 = [...fill(10, 361), ...fill(5, 336), ...fill(4, 330)];
const grid2 = [219, 342, 464, 587, 709, 831, 954, 1074, 1197, 1319, 1441, 1564].map(fy2);

const Charts2 = () => (
  <>
    <Pane
      grow="flex-[617]"
      y={102}
      h={617}
      grid={grid2}
      labels={grid2.map((g, i) => [Math.min(g, 712), (2930 - i * 10).toFixed(2)])}
      cross={456}
      tip={["(193)", "2872.55"]}
      last={[558, "2852.13"]}
      marks={[
        [815, 146, "2934.90"],
        [1437, 699, "2822.19"],
      ]}
      title={
        <Info
          name="上证指数"
          date="2019/06/05"
          segs={[
            ["开2882.94↑", R],
            ["高2888.77↑", R],
            ["低2867.35↑", R],
            ["收2872.55↑", R],
            ["量72953816↑", R],
            ["额7040126↑", R],
            ["换0.22% ", W],
            ["振0.75% ", W],
            ["涨(10.27)0.36%↑", R],
          ]}
        />
      }
    >
      <Candles bars={k2} x0={X2} step={S2} w={19} fy={fy2} />
      <path d="M796 145.500h17M1418 707.500h17" stroke="#dcdcf0" />
    </Pane>
    <TimeAxis
      dates={[[25, "2019/05/17"], [149, "05/21"], [249, "05/22"], [348, "05/23"], [447, "05/24"], [547, "05/27"], [646, "05/28"], [746, "05/29"], [845, "05/30"], [944, "05/31"], [1044, "06/03"], [1143, "06/04"], [1342, "06/06"], [1441, "06/10"]]}
      thumb={1081}
      cursor={[1243, "06/05,09:30"]}
      period="60分钟"
    />
    <Pane
      grow="flex-[148]"
      y={739}
      h={148}
      grid={[770, 823, 877]}
      labels={[[770, "10000"], [823, "5000"], [877, "0"]]}
      unit
      title={<Legend name="VOL(5,10,20)" items={[["量 72953816↑", "text-white"], ["MA1 52283444↑", Y], ["MA2 52278836↑", M], ["MA3 50135944↓", "text-[#00ff00]"]]} />}
    >
      <Volumes vols={v2} x0={X2} step={S2} w={19} base={877} fy={fy2b} />
      <Poly pts={average(v2, before2, 5, X2, S2, fy2b)} color="#ffff00" />
      <Poly pts={average(v2, before2, 10, X2, S2, fy2b)} color="#ff00ff" />
      <Poly pts={average(v2, before2, 20, X2, S2, fy2b)} color="#00ff00" />
    </Pane>
    <Pane
      grow="flex-[151]"
      y={888}
      h={150}
      grid={[935, 968, 1001, 1034]}
      labels={[[935, "10.00"], [968, "0"], [1001, "-10.00"], [1029, "-20.00"]]}
      boxed
      title={<Legend name="MACD(12,26,9)" items={[["DIFF -6.819↓", "text-white"], ["DEA -3.144↓", Y], ["MACD -7.350↑", M]]} />}
    >
      <Hist vals={m2} x0={X2} step={S2} zero={968} fy={fy2b} />
      <Poly
        color="#ffffff"
        pts={conv("25,882 50,927 75,953 100,978 125,985 149,970 175,939 199,916 224,901 249,889 274,880 323,880 350,901 373,913 398,928 423,943 447,955 472,961 497,964 522,964 547,970 572,961 597,930 621,901 646,864 671,826 696,802 721,785 746,775 771,766 795,748 820,739 845,757 870,769 895,778 920,772 944,763 980,763 1019,772 1044,784 1069,796 1094,802 1119,805 1143,825 1168,844 1193,859 1218,871 1243,875 1268,868 1292,865 1317,873 1342,892 1367,904 1392,922 1417,940 1441,943 1466,931 1491,928 1516,922", id, fy2b)}
      />
      <Poly
        color="#ffff00"
        pts={conv("25,883 50,892 75,904 100,919 125,931 149,940 175,940 224,928 274,912 299,904 348,901 398,907 447,922 497,937 547,949 597,948 621,937 646,922 696,882 746,844 795,814 820,799 845,790 895,784 944,778 994,772 1044,775 1094,784 1119,787 1143,796 1168,805 1193,817 1243,835 1268,844 1292,847 1342,859 1367,868 1417,892 1441,901 1491,913 1516,913", id, fy2b)}
      />
    </Pane>
  </>
);

function Wide({ rows }: { rows: [string, string, string][] }) {
  return (
    <table className="w-full border-separate border-spacing-0 text-[16px] leading-[22px]">
      <tbody>
        {rows.map(([a, v, c]) => (
          <tr key={a}>
            <th className={"h-[22px] p-0 pl-px text-left font-normal " + B}>{a}</th>
            <td className={"p-0 pr-0.5 text-right " + c}>{v}</td>
          </tr>
        ))}
      </tbody>
    </table>
  );
}
const Panel2 = () => (
  <>
    <PanelTitle code="000001" name="上证指数" tone={Y} n="(1)" />
    <div className="border-b border-[#a00000]">
      <Wide
        rows={[
          ["最新", "2852.13", R],
          ["涨跌", "24.33", R],
          ["涨幅", "0.86%", R],
          ["总额", "1624.90亿", W],
          ["总手", "16659万", W],
          ["前收", "2827.80", W],
          ["今开", "2833.01", R],
          ["最高", "2861.13", R],
          ["最低", "2824.36", G],
        ]}
      />
    </div>
    <div className="border-b border-[#a00000]">
      <div className={"pt-0.5 text-center text-[16px] leading-5 " + W}>上海证券交易所</div>
      <Wide rows={[["五档委买手数", "8462447", R], ["五档委卖手数", "18993156", G], ["委比", "-38.36%", G]]} />
    </div>
    <Quote last rows={[["上涨", "1121", R, "涨停", "26", R], ["下跌", "318", G, "跌停", "17", G], ["平盘", "62", W, "空盘", "24", W]]} />
    <Ticks
      tone={R}
      rows={parseTicks(
        "14:55|2851.99|u|r104864 :16|2851.61|d|g59504 :21|2851.64|u|r125872 :26|2851.90|u|r103616 :31|2851.51|d|g61600 :36|2851.02|d|g130688 :41|2851.59|u|r98096 :46|2851.50|d|g57296 :51|2850.63|d|g97616 :56|2851.21|u|r121488 14:56|2851.81|u|r63056 :06|2852.00|u|r119552 :12|2851.39|d|g117152 :16|2851.51|u|r58096 :21|2851.63|u|r124032 :26|2851.96|u|r109440 :31|2851.92|d|g59488 :36|2851.46|d|g140992 :41|2852.15|u|r111664 :46|2851.93|d|g57040 :51|2852.35|u|r127232 :56|2852.15|d|g92736 14:57|2852.31|u|r58688 :06|2852.28|d|g22432 15:00|2852.11|d|g1866816 :11|2852.13|u|r219088",
      )}
    />
    <PanelTabs swap />
  </>
);

/* ---------- window 3: 宝钢股份 ---------- */
const k3 = parseBars(`c416,605,374,646 r626,667,478,709 r605,667,520,688 c626,813,605,854 c875,896,792,958 r813,875,750,896 r626,750,563,792 r104,563 c166,229,146,291 r270,291,146,312 c270,480,250,500 r354,436,270,436 c374,416,333,520 c312,437,270,458 c354,520 c395,416,354,520`);
const v3 = parseVols("c1150 c1158 r1122 c1114 c1158 r1185 r1132 r1052 c1155 c1136 c1106 r1161 c1186 c1181 c1186 r1172");
const m3 = "1368 1358 1349 1347 1347 1341 1330 1301 1288 1282 1288 1286 1290 1293 1299 1301".split(" ").map(Number);
const fy3: Map1 = (y) => 80 + y / 1.6;
const X3 = 91.5;
const S3 = 90.57;
const grid3 = [105, 208, 312, 416, 520, 626, 730, 834, 938].map(fy3);

const Charts3 = () => (
  <>
    <Pane
      grow="flex-[589]"
      y={102}
      h={589}
      grid={grid3}
      labels={grid3.map((g, i) => [g, (6.5 - i * 0.05).toFixed(2)])}
      cross={353}
      tip={["(4323)", "6.34"]}
      marks={[
        [745, 146, "6.50"],
        [473, 671, "6.09"],
      ]}
      title={
        <Info
          name="宝钢股份"
          date="2019/06/05"
          segs={[
            ["开6.40↑", R],
            ["高6.42↑", R],
            ["低6.33↑", C],
            ["收6.34↓", C],
            ["量205906↑", R],
            ["额13122↑", R],
            ["换0.09% ", W],
            ["振1.42% ", W],
            ["涨(-0.01)-0.16%↓", C],
          ]}
        />
      }
    >
      <Candles bars={k3} x0={X3} step={S3} w={71} fy={fy3} />
      <path d="M726 145.500h17M454 679.500h17" stroke="#dcdcf0" />
    </Pane>
    <TimeAxis dates={[[91, "2019"]]} thumb={1523} cursor={[1269, "19/06/05,三"]} period="日线" ticks={[182, 635, 1450]} />
    <Pane
      grow="flex-[143]"
      y={711}
      h={142}
      grid={[784, 843]}
      labels={[[784, "50.00"], [843, "0.00"]]}
      unit
      title={<Legend name="VOL(5,10,20)" items={[["量 205905.906↑", "text-white"], ["MA1 353936.438↓", Y], ["MA2 398941.813↓", M], ["MA3 410393↓", "text-[#00ff00]"]]} />}
    >
      <Volumes vols={v3} x0={X3} step={S3} w={71} base={843} fy={fy3} />
      <Poly color="#ff00ff" pts={conv("91,1130 182,1141 272,1143 363,1141 453,1141 544,1149 635,1147 725,1138 816,1137 906,1136 997,1132 1088,1132 1178,1138 1269,1145 1359,1148 1450,1147", id, fy3)} />
      <Poly color="#ffff00" pts={conv("91,1151 182,1151 272,1147 363,1139 453,1141 544,1148 635,1143 725,1129 816,1137 906,1132 997,1116 1088,1122 1178,1149 1269,1154 1359,1164 1450,1177", id, fy3)} />
      <Poly color="#00ff00" pts={conv("91,1130 272,1130 363,1129 544,1132 635,1132 725,1133 816,1135 906,1135 997,1132 1088,1136 1178,1140 1269,1142 1359,1145 1450,1148", id, fy3)} />
    </Pane>
    <Pane
      grow="flex-[144]"
      y={854}
      h={143}
      grid={[914, 951, 988]}
      labels={[[914, "0"], [951, "-0.10"], [988, "-0.20"]]}
      boxed
      title={<Legend name="MACD(12,26,9)" items={[["DIFF -0.080↑", "text-white"], ["DEA -0.117↑", Y], ["MACD 0.073↓", M]]} />}
    >
      <Hist vals={m3} x0={X3} step={S3} zero={914} fy={fy3} />
      <Poly color="#ffffff" pts={conv("91,1453 182,1451 250,1448 360,1448 453,1450 544,1448 600,1443 635,1440 680,1431 725,1422 816,1410 906,1401 997,1397 1088,1391 1178,1386 1269,1382 1359,1381 1450,1377", id, fy3)} />
      <Poly color="#ffff00" pts={conv("91,1436 182,1439 272,1441 453,1444 544,1445 635,1444 725,1440 816,1434 906,1428 997,1421 1088,1415 1178,1409 1269,1404 1359,1399 1450,1394", id, fy3)} />
    </Pane>
  </>
);
const Panel3 = () => (
  <>
    <PanelTitle tag="R" tag2="300" code="600019" name="宝钢股份" tone={Y} n="(15)" />
    <Quote rows={[["委比", "-25.36%", G, "委差", "-11375", G]]} />
    <Quote rows={[["卖⑤", "6.39", R, "", "3737", G], ["卖④", "6.38", R, "", "10671", G], ["卖③", "6.37", R, "", "4075", G], ["卖②", "6.36", R, "", "2931", G], ["卖①", "6.35", R, "", "6700", G]]} />
    <Quote rows={[["买①", "6.34", R, "", "1922", R], ["买②", "6.33", R, "", "2692", R], ["买③", "6.32", R, "", "3302", R], ["买④", "6.31", R, "", "3780", R], ["买⑤", "6.30", W, "", "5043", R]]} />
    <Quote
      rows={[
        ["最新", "6.35", R, "今开", "6.36", R, true],
        ["涨跌", "0.05", R, "前收", "6.30", W],
        ["涨幅", "0.79%", R, "最高", "6.38", R],
        ["振幅", "1.27%", W, "最低", "6.30", W],
        ["总手", "26.08万", W, "量比", "0.87", W],
        ["外盘", "128635", R, "内盘", "132182", G],
      ]}
    />
    <Quote
      last
      rows={[
        ["换手", "0.12%", W, "股本", "223亿", W],
        ["市值", "1415亿", W, "流通", "221亿", W],
        ["收益", "0.12①", W, "市盈", "13.23", W],
        ["行业", "钢铁", W, "概念", "融资融券 ...", W, true],
      ]}
    />
    <Ticks
      tone={R}
      rows={parseTicks(
        "14:55|6.33|d|g32 :37|6.33||g70 :40|6.34|u|r4 :49|6.33|d|g17 :55|6.34|u|r48 14:56|6.34||r1 :07|6.34||r1 :10|6.34||r55 :13|6.33|d|g34 :16|6.33||g54 :19|6.33||g1000 :22|6.34|u|r30 :29|6.34||r59 :31|6.34||g98 :43|6.34||r9 :46|6.35|u|r63 :49|6.35||r68 :52|6.34|d|g45 15:00|6.35|u|r2012",
      )}
    />
    <PanelTabs />
  </>
);

function LayoutDialog() {
  return (
    <div role="dialog" aria-label="布局设置" className="absolute top-[320px] left-[810px] flex h-[400px] w-[300px] flex-col items-center border border-[#9a9a9a] bg-[#f0f0f0] pt-6 text-[12px]">
      <button className="absolute top-0 right-1 text-[13px] font-bold text-[#7896c8]">X</button>
      <button className="mr-2 mb-5 h-[30px] w-[150px] shrink-0 bg-[#e27029] font-bold text-white">关闭十字光标联动</button>
      {[1, 2, 3, 4, 5, 6, 7, 8].map((n) => (
        <div key={n} className="mb-1 flex w-full items-center justify-between pr-[59px] pl-[52px] text-[#a0a0a0]">
          <span id={"slot" + n}>保存布局{n}</span>
          <button aria-describedby={"slot" + n} className="h-[26px] w-20 border border-[#a0a0a0] bg-[#cccccc] text-[#a0a0a0]">
            删除
          </button>
        </div>
      ))}
      <button className="mt-5 mr-2 h-[30px] w-[150px] shrink-0 bg-[#393939] font-bold text-[#d8d8d8]">一键清除所有布局</button>
    </div>
  );
}

/* ---------- window 4: 金逸影视 ---------- */
const k4 = parseBars(`r874,876,859,876 c856,856,844,881 r852,856,835,856 c858,869,809,905 r759,869 c736,752,697,791 r735,751,706,751 c745,758,736,838 c756,791,756,806 r694,788 c694 r586 c586 r468 c468 c336,336,336,481 r336,336,336,375 c333,479,211,479 r368,479,308,479 c509 c509 c635 c635 c750 c750 r851,851,845,851 c851,851,817,851 c944,944,902,944 c944 c1026,1026,1003,1026 c1027,1027,1025,1027`);
const ribbon = "900-925 881-913 870-899 864-887 849-865 833-846 813-829 797-819 791-812 765-794 740-775 716-749 691-722 653-682 611-653 547-611 497-572 465-543 433-501 422-482 430-465 453-469 475-495 502-555 530-594 582-662 633-711 679-774 738-818 790-874 841-913".split(" ");
const steps = "1138-1143 1141-1143 1135-1141 1135-1141 1134-1141 1134-1141 1132-1141 1132-1148 1148-1160 1151-1160 1135-1151 1111-1135 1111-1112 1111-1112 1111-1112 1111-1112 1111-1112 1111-1135 1135-1150 1150-1183 1183-1202 1202-1241 1241-1262 1262-1273 1272-1274 1272-1274 1272-1274 1272-1274 1272-1274 1272-1274 1272-1274".split(" ");
const power = parseVols("g1379 g1379 g1379 g1384 m1375 m1371 m1366 g1369 g1376 m1372 m1371 m1360 m1356 m1344 m1342 m1330 m1327 g1343 g1346 g1362 g1375 g1395 g1408 w1426 w1436 w1452 w1459 w1472 w1478 w1488 w1493");
const powerFill: Record<string, string> = { g: "#00ff00", m: "#ff00ff", w: "#ffffff" };
const fy4: Map1 = (y) => y / 1.452;
const X4 = 49.5;
const S4 = 48.1;
const grid4 = [270, 346, 420, 495, 571, 646, 722, 796, 871, 947, 1023].map(fy4);
const Blocks = ({ data, color }: { data: string[]; color: (i: number) => string }) => (
  <g>
    {data.map((d, i) => {
      const [t, b] = d.split("-").map((v) => Math.round(fy4(Number(v))));
      return <rect key={i} x={Math.round(X4 + S4 * i) - 25} y={t} width={49} height={Math.max(b - t, 1)} fill={color(i)} />;
    })}
  </g>
);

const Charts4 = () => (
  <>
    <Pane
      grow="flex-[617]"
      y={102}
      h={617}
      grid={grid4}
      labels={grid4.slice(0, 10).map((g, i) => [g, (40 - i * 2).toFixed(2)])}
      cross={586}
      tip={["(97)", "24.53"]}
      last={[707, "19.87"]}
      marks={[
        [887, 146, "41.58"],
        [1388, 699, "19.87"],
      ]}
      title={
        <Info
          name="金逸影视"
          date="2019/06/05"
          sub="三剑合一"
          segs={[
            ["开24.53↓", C],
            ["高24.68↓", C],
            ["低24.53↓", C],
            ["收24.53↓", C],
            ["量269238↑", R],
            ["额66046↑", R],
            ["换40.07% ", W],
            ["振0.55% ", W],
            ["涨(-2.73)-10.01%↓", C],
          ]}
        />
      }
    >
      <Blocks data={ribbon} color={(i) => (i < 19 ? "#ffff00" : "#0000ff")} />
      <Candles bars={k4} x0={X4} step={S4} w={37} fy={fy4} />
      <path d="M867 145.500h18M1427 699l17 8" stroke="#dcdcf0" fill="none" />
    </Pane>
    <TimeAxis
      dates={[[49, "2019/05/17"], [193, "05/21"], [290, "05/22"], [386, "05/23"], [482, "05/24"], [578, "05/27"], [675, "05/28"], [771, "05/29"], [867, "05/30"], [963, "05/31"], [1059, "06/03"], [1155, "06/04"], [1348, "06/06"], [1444, "06/10"]]}
      thumb={1073}
      cursor={[1252, "06/05,09:30"]}
      period="120分钟"
    />
    <Pane grow="flex-[148]" y={739} h={148} grid={[765, 821, 877]} labels={[[765, "100.00"], [821, "50.00"], [877, "0"]]} title={<Legend name="操盘提醒" items={[]} />}>
      <Blocks data={steps} color={(i) => (i < 12 || i === 17 || i === 18 ? "#ff0000" : i < 17 ? "#a00000" : "#00ff00")} />
      <path d="M49 771.500H1492" stroke="#00ff00" />
      <path d="M49 871.500H1492" stroke="#0000c0" />
    </Pane>
    <Pane
      grow="flex-[151]"
      y={888}
      h={150}
      grid={[937, 972, 1007]}
      labels={[[937, "20.00"], [972, "0"], [1007, "-20.00"], [1029, "-40.00"]]}
      boxed
      title={<Legend name="庄家抬轿" items={[["无庄控盘 -15.809↓", "text-white"], ["开始控盘 0", Y], ["有庄控盘 0", "text-[#ff0000]"], ["高度控盘 0", M], ["主力出货 0", "text-[#00ff00]"]]} />}
    >
      {power.map((p, i) => {
        const y = Math.round(fy4(p.v));
        return <rect key={i} x={Math.round(X4 + S4 * i) - 15} y={Math.min(y, 972)} width={29} height={Math.abs(y - 972)} fill={powerFill[p.k]} />;
      })}
      <path d="M49 972.500H1492" stroke="#ffff00" />
    </Pane>
  </>
);
const Panel4 = () => (
  <>
    <PanelTitle code="002905" name="金逸影视" tone={Y} n="(7)" />
    <Quote rows={[["委比", "-100.00%", G, "委差", "-47514", G]]} />
    <Quote rows={[["卖⑤", "19.91", G, "", "145", G], ["卖④", "19.90", G, "", "161", G], ["卖③", "19.89", G, "", "255", G], ["卖②", "19.88", G, "", "932", G], ["卖①", "19.87", H, "", "46021", G]]} />
    <Quote rows={[["买①", "", W], ["买②", "", W], ["买③", "", W], ["买④", "", W], ["买⑤", "", W]]} />
    <Quote
      rows={[
        ["最新", "19.87", H, "今开", "19.90", G, true],
        ["涨跌", "-2.21", G, "前收", "22.08", W],
        ["涨幅", "-10.01%", G, "最高", "20.47", G],
        ["振幅", "2.72%", W, "最低", "19.87", H],
        ["总手", "23.82万", W, "量比", "1.37", W],
        ["外盘", "197881", R, "内盘", "40368", G],
      ]}
    />
    <Quote
      last
      rows={[
        ["换手", "35.39%", W, "股本", "2.69亿", W],
        ["市值", "53.41亿", W, "流通", "6720万", W],
        ["收益", "0.12①", W, "市盈", "41.40", W],
        ["行业", "影视动漫", W, "概念", "虚拟现实 ...", W, true],
      ]}
    />
    <Ticks
      tone={G}
      rows={parseTicks(
        "14:55|19.87||r7 :51|19.87||r11 :57|19.87||r2 14:56|19.87||r4 :03|19.87||r44 :06|19.87||r24 :09|19.87||r1 :15|19.87||r20 :21|19.87||r14 :24|19.87||r20 :27|19.87||r16 :30|19.87||r14 :33|19.87||r7 :36|19.87||r12 :39|19.87||r33 :45|19.87||r59 :51|19.87||r5 :54|19.87||r3 :57|19.87||r6 14:57|19.87||r4 15:00|19.87||r419",
      )}
    />
    <PanelTabs />
  </>
);

const ImeBar = () => (
  <div className="absolute top-[816px] right-[135px] flex h-[22px] w-[162px] items-center justify-between border border-[#b0c8e0] bg-white px-0.5 text-[#3c8cdc]">
    <svg className="h-[18px] w-[18px]" viewBox="0 0 18 18">
      <rect x="0" y="1" width="18" height="16" rx="5" fill="#f26522" />
      <path d="M13 5c-3-1.500-8-1-8 1.500s8 1.500 8 4-5 3-8.500 1" stroke="#fff" strokeWidth={2} fill="none" />
    </svg>
    <span className="text-[15px] leading-5 font-bold">中</span>
    <svg className="h-4 w-[14px]" viewBox="0 0 14 16" fill="currentColor">
      <path d="M9 2c2 5-1 10-8 9 3 4 12 3 12-4 0-2-1-4-4-5z" />
    </svg>
    <svg className="h-4 w-3" viewBox="0 0 12 16" fill="none" stroke="currentColor" strokeWidth={1.3}>
      <circle cx="4" cy="5" r="2" />
      <path d="M9 9v2l-1.500 2" strokeWidth={2} />
    </svg>
    <svg className="h-4 w-[18px]" viewBox="0 0 18 16">
      <rect x="0.500" y="3" width="17" height="11" fill="currentColor" />
      <path d="M2 6h14M2 9h14M5 12h8" stroke="#fff" strokeWidth={1.4} strokeDasharray="2 1" />
    </svg>
    <svg className="h-4 w-3" viewBox="0 0 12 16" fill="#c8c8c8">
      <circle cx="6" cy="6" r="3" />
      <path d="M1 14c0-6 10-6 10 0z" />
    </svg>
    <svg className="h-4 w-4" viewBox="0 0 16 16" fill="currentColor">
      <path d="M5 2c1 2 5 2 6 0l4.500 3-2 3L12 7v7H4V7L2.500 8l-2-3z" />
    </svg>
    <svg className="h-4 w-4" viewBox="0 0 16 16" fill="none" stroke="currentColor" strokeWidth={3}>
      <path d="M2 14l7-7M9.500 2.500c-2 3 1 6 4 4" />
    </svg>
  </div>
);

/* ---------- taskbar ---------- */
function Taskbar() {
  return (
    <footer className="flex h-10 shrink-0 items-center border-t border-[#6aa2d0] bg-[linear-gradient(90deg,#2d6ea6_0%,#3c86c2_20%,#1f66ac_45%,#2d7cc0_60%,#3a88c8_66%,#5aa6e0_72%,#2a6cb0_78%,#1c4f8c_100%)] text-[12px] text-white">
      <button aria-label="开始" className="ml-2 h-9 w-9">
        <svg viewBox="0 0 36 36">
          <circle cx="18" cy="18" r="17" fill="#1c5a94" stroke="#9cc8ec" />
          <path d="M9 12c3-2 5-1 8 0v6c-3-1-5-2-8 0z" fill="#f26522" />
          <path d="M18.500 12c3 1 5 2 8 0v6c-3 2-5 1-8 0z" fill="#8cc63f" />
          <path d="M9 19.500c3-2 5-1 8 0v6c-3-1-5-2-8 0z" fill="#3ca0f0" />
          <path d="M18.500 19.500c3 1 5 2 8 0v6c-3 2-5 1-8 0z" fill="#ffd23c" />
        </svg>
      </button>
      <span className="mx-[14px] h-7 w-2 bg-[radial-gradient(#1a3c60_1px,transparent_1px)] bg-[length:4px_4px]" />
      <button aria-label="Internet Explorer" className="flex h-10 w-[56px] items-center justify-center">
        <svg className="h-8 w-8" viewBox="0 0 32 32" fill="none">
          <path d="M24 21c-3 7-16 7-16-3 0-12 17-12 17 0H10" stroke="#6cd0ff" strokeWidth={5} />
          <path d="M4 28c-5-6 14-26 24-24 3 2-1 7-1 7" stroke="#ffc832" strokeWidth={2} />
        </svg>
      </button>
      <button aria-label="浏览器" className="mr-1 flex h-[38px] w-[58px] items-center justify-center rounded-sm border border-[#cfe4f4] bg-white/40">
        <svg className="h-8 w-8" viewBox="0 0 32 32">
          <circle cx="16" cy="16" r="14" fill="#6cc24a" />
          <path d="M8 25C8 12 16 7 23 6c2 8-2 17-11 17" fill="#fff" />
          <path d="M8 26c2-8 6-12 11-15" stroke="#6cc24a" strokeWidth={2} fill="none" />
        </svg>
      </button>
      <button aria-label="资源管理器" className="mr-1 flex h-[38px] w-[58px] items-center justify-center rounded-sm border border-[#cfe4f4] bg-white/40">
        <svg className="h-8 w-8" viewBox="0 0 32 32">
          <path d="M2 5h10l2 3h15v20H2z" fill="#f0cc68" />
          <path d="M5 12h24v16H2z" fill="#fbe8a0" />
          <path d="M9 20h15v8H9z" fill="#7cbcec" />
        </svg>
      </button>
      <button aria-label="战略家" className="flex h-[38px] w-[54px] items-center justify-center rounded-sm border border-[#cfe4f4] bg-white/50">
        <svg className="h-8 w-8" viewBox="0 0 32 32">
          <rect x="1" y="1" width="30" height="30" rx="6" fill="#142c7c" />
          <path d="M16 27C6 24 5 13 11 7c-2 8 2 15 13 15-2 4-5 5-8 5z" fill="#d81e1e" />
          <path d="M11 8v11M7 13h8M8 15h6v5H8zM16 13l9-3M19 7c0 8 2 13 6 17M24 16l-8 8" stroke="#fff" strokeWidth={2} fill="none" />
        </svg>
      </button>
      <div className="ml-auto flex h-full items-center gap-2.5">
        <span className="h-7 w-2 bg-[radial-gradient(#0c2c50_1px,transparent_1px)] bg-[length:4px_4px]" />
        <span className="ml-1 flex h-4 w-4 items-center justify-center rounded-sm bg-[#f26522] text-[13px] leading-4 font-bold">S</span>
        <span className="mx-1 border-x-[4px] border-b-[4px] border-x-transparent border-b-white" />
        <svg className="h-4 w-4" viewBox="0 0 16 16">
          <circle cx="8" cy="8" r="7.500" fill="#7ed04a" />
          <path d="M12 10c-2 4-8 3-8-2s8-5 8 0H5" stroke="#fff" strokeWidth={2} fill="none" />
        </svg>
        <svg className="h-4 w-4" viewBox="0 0 16 16">
          <ellipse cx="8" cy="6" rx="5" ry="6" fill="#101010" />
          <ellipse cx="8" cy="11" rx="6" ry="4" fill="#f4f4f4" />
          <path d="M2 9c4 2 8 2 12 0v2c-4 2-8 2-12 0z" fill="#e02020" />
        </svg>
        <svg className="h-4 w-4" viewBox="0 0 16 16" fill="#fff">
          <path d="M3 5h4l4-4v14l-4-4H3z" />
        </svg>
        <svg className="h-4 w-4" viewBox="0 0 16 16" fill="none" stroke="#fff" strokeWidth={1.5}>
          <path d="M4 4h11v8H4zM8 15h6M1 1v7h3" />
        </svg>
        <div className="w-[74px] text-center leading-[18px]">
          <div>15:14</div>
          <div>2019/6/10</div>
        </div>
        <button aria-label="显示桌面" className="h-full w-[14px] border-l border-[#88b4dc] bg-white/20" />
      </div>
    </footer>
  );
}

export default function App() {
  return (
    <main className="flex h-screen min-h-[1900px] w-full min-w-[3200px] bg-black font-['Liberation_Sans','Noto_Sans_CJK_SC',sans-serif]">
      <div className="flex min-w-0 flex-1 flex-col">
        <div className="flex h-1/2 flex-col">
          <Terminal menuOn="首页" tools={homeTools} period="30分钟" added crossX={1239} charts={<Charts1 />} panel={<Panel1 />} />
        </div>
        <div className="flex min-h-0 flex-1 flex-col">
          <Terminal menuOn="多屏设置" tools={layoutTools} period="日线" crossX={1269} charts={<Charts3 />} panel={<Panel3 />}>
            <LayoutDialog />
          </Terminal>
        </div>
        <Taskbar />
      </div>
      <div className="flex min-w-0 flex-1 flex-col">
        <div className="flex h-1/2 flex-col">
          <Terminal menuOn="首页" tools={homeTools} period="60分钟" crossX={1243} charts={<Charts2 />} panel={<Panel2 />} />
        </div>
        <div className="flex h-1/2 flex-col">
          <Terminal
            menuOn="首页"
            tools={homeTools.map((t, i) => (i === 0 ? { ...t, on: true, tone: "text-white" } : t))}
            period="120分钟"
            macd={false}
            crossX={1252}
            charts={<Charts4 />}
            panel={<Panel4 />}
          >
            <ImeBar />
          </Terminal>
        </div>
      </div>
    </main>
  );
}
